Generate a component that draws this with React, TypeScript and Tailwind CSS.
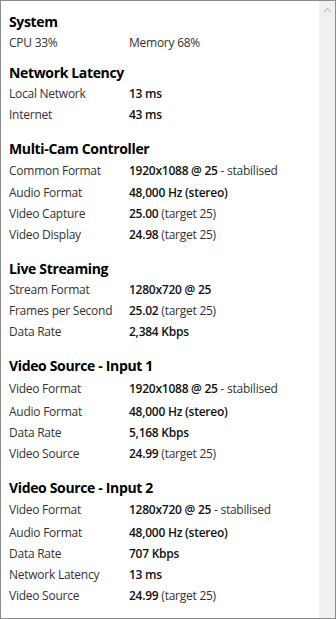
import React from "react";

type Row = { label: string; value: string; note?: string; h?: string };
type Section = { title: string; rows: Row[]; gap: string };

const SECTIONS: Section[] = [
  {
    title: "Network Latency",
    gap: "mb-[13px]",
    rows: [
      { label: "Local Network", value: "13 ms" },
      { label: "Internet", value: "43 ms" },
    ],
  },
  {
    title: "Multi-Cam Controller",
    gap: "mb-[13px]",
    rows: [
      { label: "Common Format", value: "1920x1088 @ 25", note: " - stabilised", h: "h-[23px]" },
      { label: "Audio Format", value: "48,000 Hz (stereo)" },
      { label: "Video Capture", value: "25.00", note: " (target 25)" },
      { label: "Video Display", value: "24.98", note: " (target 25)" },
    ],
  },
  {
    title: "Live Streaming",
    gap: "mb-[13px]",
    rows: [
      { label: "Stream Format", value: "1280x720 @ 25" },
      { label: "Frames per Second", value: "25.02", note: " (target 25)" },
      { label: "Data Rate", value: "2,384 Kbps" },
    ],
  },
  {
    title: "Video Source - Input 1",
    gap: "mb-[13px]",
    rows: [
      { label: "Video Format", value: "1920x1088 @ 25", note: " - stabilised", h: "h-[25px]" },
      { label: "Audio Format", value: "48,000 Hz (stereo)" },
      { label: "Data Rate", value: "5,168 Kbps" },
      { label: "Video Source", value: "24.99", note: " (target 25)" },
    ],
  },
  {
    title: "Video Source - Input 2",
    gap: "",
    rows: [
      { label: "Video Format", value: "1280x720 @ 25", note: " - stabilised", h: "h-[24px]" },
      { label: "Audio Format", value: "48,000 Hz (stereo)" },
      { label: "Data Rate", value: "707 Kbps" },
      { label: "Network Latency", value: "13 ms" },
      { label: "Video Source", value: "24.99", note: " (target 25)" },
    ],
  },
];

function Heading({ children }: { children: React.ReactNode }) {
  return (
    <div className="h-[21px] flex items-center text-[14px] font-bold text-black tracking-[-0.35px]">
      {children}
    </div>
  );
}

function StatRow({ row }: { row: Row }) {
  return (
    <div className={`${row.h ?? "h-[21px]"} flex items-center text-[12px] tracking-[-0.25px]`}>
      <span className="w-[120px] text-[#333]">{row.label}</span>
      <span className="text-[#111]">
        <span className="font-semibold">{row.value}</span>
        {row.note && <span className="text-[#333]">{row.note}</span>}
      </span>
    </div>
  );
}

export default function App() {
  return (
    <div
      className="w-[336px] h-[619px] flex bg-white border border-[#8c8c8c] overflow-hidden"
      style={{ fontFamily: '"Open Sans", "Noto Sans", sans-serif' }}
    >
      <div className="flex-1 pl-2 pt-[10px]">
        <div className="mb-[9px]">
          <Heading>System</Heading>
          <div className="h-[21px] flex items-center text-[12px] tracking-[-0.25px] text-[#333]">
            <span className="w-[120px]">CPU 33%</span>
            <span>Memory 68%</span>
          </div>
        </div>
        {SECTIONS.map((s) => (
          <div key={s.title} className={s.gap}>
            <Heading>{s.title}</Heading>
            {s.rows.map((r, i) => (
              <StatRow key={i} row={r} />
            ))}
          </div>
        ))}
      </div>
      <div className="w-4 bg-[#f0f0f0] flex justify-center pt-[6px]">
        <svg width="9" height="6" viewBox="0 0 9 6">
          <path d="M1 5 L4.5 1.5 L8 5" fill="none" stroke="#c4c4c4" strokeWidth="1.2" />
        </svg>
      </div>
    </div>
  );
}
